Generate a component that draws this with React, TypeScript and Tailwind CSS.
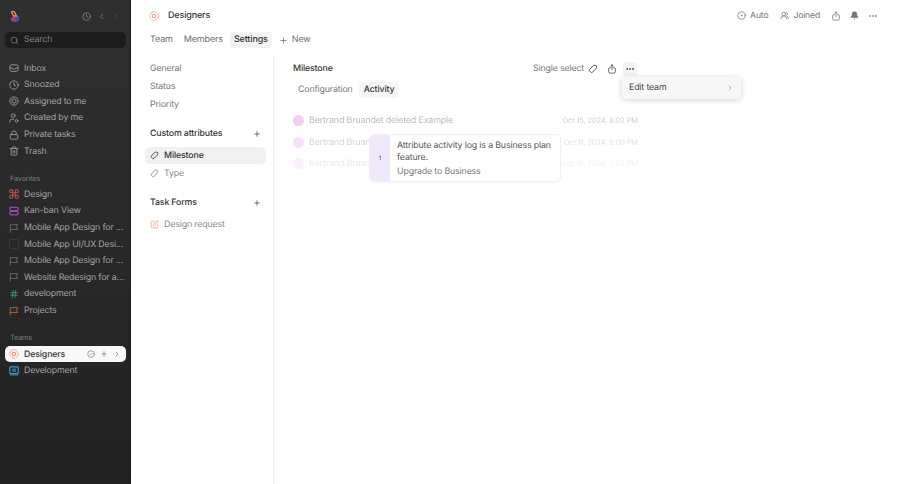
import {
  Bell,
  ChevronLeft,
  ChevronRight,
  CircleCheck,
  CircleDot,
  Clock,
  Ellipsis,
  Hash,
  Lock,
  Plus,
  Search,
  SquarePen,
  Trash2,
  UsersRound,
} from 'lucide-react'
import type { ReactNode } from 'react'

const font = { fontFamily: 'Inter, sans-serif' }

type IconProps = { className?: string }

function TeamIcon({ className = '' }: IconProps) {
  return (
    <svg viewBox="0 0 12 12" fill="none" stroke="currentColor" className={className}>
      <circle cx="6" cy="6" r="5" strokeWidth="1" strokeDasharray="2.2 0.6" />
      <circle cx="6" cy="6" r="2.2" strokeWidth="1.2" />
    </svg>
  )
}

function TagIcon({ className = '' }: IconProps) {
  return (
    <svg viewBox="0 0 12 12" fill="none" stroke="currentColor" strokeWidth="1.1" className={className}>
      <path d="M7.2 1.6h1.6a1.6 1.6 0 0 1 1.6 1.8l-.2 1a2 2 0 0 1-.6 1.1L5.4 9.9a1.5 1.5 0 0 1-2.1 0L2 8.6a1.5 1.5 0 0 1 0-2.1L6 2.1a1.6 1.6 0 0 1 1.2-.5z" />
    </svg>
  )
}

function ShareIcon({ className = '' }: IconProps) {
  return (
    <svg viewBox="0 0 12 12" fill="none" stroke="currentColor" strokeWidth="1" strokeLinecap="round" strokeLinejoin="round" className={className}>
      <path d="M6 7V1M4.4 2.5 6 1l1.6 1.5" />
      <path d="M4 4.4h-.5A1.5 1.5 0 0 0 2 5.9V9a2 2 0 0 0 2 2h4a2 2 0 0 0 2-2V5.9a1.5 1.5 0 0 0-1.5-1.5H8" />
    </svg>
  )
}

function FlagIcon({ className = '' }: IconProps) {
  return (
    <svg viewBox="0 0 12 12" fill="none" stroke="currentColor" strokeWidth="1" strokeLinejoin="round" strokeLinecap="round" className={className}>
      <path d="M1.5 11V2h9L8.8 4.7l1.7 3h-9" />
    </svg>
  )
}

function InboxIcon({ className = '' }: IconProps) {
  return (
    <svg viewBox="0 0 12 12" fill="none" stroke="currentColor" strokeWidth="1" strokeLinejoin="round" className={className}>
      <rect x="1" y="2.2" width="10" height="7.8" rx="2.2" />
      <path d="M1 6h2.8l.8 1.2h2.8L8.2 6H11" />
    </svg>
  )
}

function TargetIcon({ className = '' }: IconProps) {
  return (
    <svg viewBox="0 0 12 12" fill="none" stroke="currentColor" strokeWidth="1" className={className}>
      <circle cx="6" cy="6" r="5" />
      <circle cx="6" cy="6" r="2.6" />
    </svg>
  )
}

function CreatedIcon({ className = '' }: IconProps) {
  return (
    <svg viewBox="0 0 12 12" fill="none" stroke="currentColor" strokeWidth="1" strokeLinecap="round" className={className}>
      <circle cx="5" cy="3.2" r="2.2" />
      <path d="M1.2 11V9.5a2 2 0 0 1 2-2h2.3" />
      <circle cx="9" cy="9.3" r="1.6" />
    </svg>
  )
}

function DesignIcon({ className = '' }: IconProps) {
  return (
    <svg viewBox="0 0 12 12" fill="none" stroke="currentColor" strokeWidth="1.3" className={className}>
      <rect x="1" y="1" width="3.5" height="3.5" rx="1" />
      <rect x="7.5" y="1" width="3.5" height="3.5" rx="1" />
      <rect x="1" y="7.5" width="3.5" height="3.5" rx="1" />
      <rect x="7.5" y="7.5" width="3.5" height="3.5" rx="1" />
      <path d="M4.5 4.5h3v3h-3z" />
    </svg>
  )
}

function KanbanIcon({ className = '' }: IconProps) {
  return (
    <svg viewBox="0 0 12 12" fill="none" stroke="currentColor" strokeWidth="1.5" className={className}>
      <rect x="1" y="1.5" width="10" height="4" rx="1.5" />
      <rect x="1" y="6.5" width="10" height="4" rx="1.5" />
    </svg>
  )
}

function MonitorIcon({ className = '' }: IconProps) {
  return (
    <svg viewBox="0 0 12 12" className={className}>
      <rect x="1" y="1" width="10" height="8" rx="1" fill="none" stroke="currentColor" strokeWidth="1.4" />
      <rect x="3.5" y="3" width="5" height="4" fill="currentColor" opacity="0.6" />
      <path d="M1 10.7h10" stroke="currentColor" strokeWidth="1.2" />
    </svg>
  )
}

function Logo() {
  return (
    <svg viewBox="0 0 12 14" className="w-[11px] h-[13px]">
      <circle cx="7.6" cy="9.4" r="3.8" fill="#4f46a8" />
      <circle cx="4.5" cy="10.2" r="2.6" fill="#a83f72" />
      <path d="M2.8 2.2c1-1 2.7-1 3.3 0l2 4.3H5L2.8 2.2z" fill="none" stroke="#e0982f" strokeWidth="1.5" />
    </svg>
  )
}

function NavRow({ icon, label }: { icon: ReactNode; label: string }) {
  return (
    <div className="h-[16.6px] flex items-center pl-[9px] gap-[5px] text-[8.8px] text-[#a3a3a3] whitespace-nowrap">
      <span className="w-[10px] flex justify-center shrink-0">{icon}</span>
      <span>{label}</span>
    </div>
  )
}

const ic = 'w-[10px] h-[10px]'

function Sidebar() {
  return (
    <aside className="w-[131px] shrink-0 h-full bg-gradient-to-b from-[#2f2f2f] to-[#222222] border-r border-[#191919] flex flex-col">
      <div className="h-[32px] flex items-center pl-[9px] pr-[9px]">
        <Logo />
        <div className="ml-auto flex items-center gap-[6px]">
          <Clock className="w-[9px] h-[9px] text-[#8a8a8a]" />
          <ChevronLeft className="w-[9px] h-[9px] text-[#8a8a8a]" />
          <ChevronRight className="w-[9px] h-[9px] text-[#555555]" />
        </div>
      </div>
      <div className="ml-[5px] mr-[4px] h-[16px] rounded-[5px] bg-[#1d1d1d] flex items-center gap-[5px] pl-[5px] text-[8.8px] text-[#808080]">
        <Search className="w-[9px] h-[9px]" />
        Search
      </div>
      <div className="mt-[12px]">
        <NavRow icon={<InboxIcon className={ic} />} label="Inbox" />
        <NavRow icon={<Clock className={ic} />} label="Snoozed" />
        <NavRow icon={<TargetIcon className={ic} />} label="Assigned to me" />
        <NavRow icon={<CreatedIcon className={ic} />} label="Created by me" />
        <NavRow icon={<Lock className={ic} />} label="Private tasks" />
        <NavRow icon={<Trash2 className={ic} />} label="Trash" />
      </div>
      <div className="mt-[15px] mb-[2.5px] h-[9px] flex items-center pl-[10px] text-[7.3px] text-[#7c7c7c]">Favorites</div>
      <NavRow icon={<DesignIcon className={`${ic} text-[#b8514d]`} />} label="Design" />
      <NavRow icon={<KanbanIcon className={`${ic} text-[#9b45b5]`} />} label="Kan-ban View" />
      <NavRow icon={<FlagIcon className={`${ic} text-[#6f6f6f]`} />} label="Mobile App Design for ..." />
      <NavRow icon={<span className="block w-[10px] h-[10px] rounded-[2px] border border-[#3a3a3a]" />} label="Mobile App UI/UX Desi..." />
      <NavRow icon={<FlagIcon className={`${ic} text-[#6f6f6f]`} />} label="Mobile App Design for ..." />
      <NavRow icon={<FlagIcon className={`${ic} text-[#6f6f6f]`} />} label="Website Redesign for a..." />
      <NavRow icon={<Hash className={`${ic} text-[#3f9d78]`} />} label="development" />
      <NavRow icon={<FlagIcon className={`${ic} text-[#c0703f]`} />} label="Projects" />
      <div className="mt-[15px] mb-[2.5px] h-[10px] flex items-center pl-[10px] text-[7.3px] text-[#7c7c7c]">Teams</div>
      <div className="ml-[5px] mr-[4px] h-[16px] rounded-[5px] bg-[#f8f8f8] flex items-center pl-[4px] pr-[5px] text-[8.8px] font-medium text-[#333333]">
        <TeamIcon className="w-[10px] h-[10px] text-[#e58a63]" />
        <span className="ml-[5px]">Designers</span>
        <div className="ml-auto flex items-center gap-[5px] text-[#777777]">
          <CircleCheck className="w-[8px] h-[8px]" />
          <Plus className="w-[8px] h-[8px]" />
          <ChevronRight className="w-[8px] h-[8px]" />
        </div>
      </div>
      <NavRow icon={<MonitorIcon className={`${ic} text-[#3b9bd0]`} />} label="Development" />
    </aside>
  )
}

function Header() {
  return (
    <div className="h-[32px] flex items-center pl-[18px] pr-[22px]">
      <TeamIcon className="w-[10px] h-[10px] text-[#ea9a78]" />
      <span className="ml-[9px] text-[9px] font-medium text-[#333333]">Designers</span>
      <div className="ml-auto flex items-center text-[8.6px] text-[#777777]">
        <CircleDot className="w-[9px] h-[9px]" />
        <span className="ml-[4px]">Auto</span>
        <UsersRound className="w-[9px] h-[9px] ml-[12px]" />
        <span className="ml-[4px]">Joined</span>
        <ShareIcon className="w-[10px] h-[10px] ml-[11px]" />
        <Bell className="w-[9px] h-[9px] ml-[9px] fill-[#777777]" />
        <Ellipsis className="w-[10px] h-[10px] ml-[9px]" />
      </div>
    </div>
  )
}

function Tabs() {
  return (
    <div className="h-[16px] flex items-center pl-[19px] text-[9px] text-[#6e6e6e] whitespace-nowrap">
      <span>Team</span>
      <span className="ml-[11px]">Members</span>
      <span className="ml-[7px] px-[4px] h-[16px] flex items-center rounded-[4px] bg-[#f3f3f3] font-medium text-[#333333]">Settings</span>
      <Plus className="w-[9px] h-[9px] ml-[7px]" />
      <span className="ml-[4px]">New</span>
    </div>
  )
}

function AttrRow({ icon, label, active = false }: { icon: ReactNode; label: string; active?: boolean }) {
  return (
    <div className={`h-[17px] rounded-[5px] flex items-center pl-[5px] gap-[5px] text-[8.8px] ${active ? 'bg-[#f0f0f0] font-medium text-[#333333]' : 'text-[#8a8a8a]'}`}>
      {icon}
      {label}
    </div>
  )
}

function SettingsNav() {
  return (
    <div className="w-[143px] shrink-0 h-full border-r border-[#f0f0f0] pl-[14px] pr-[7px] pt-[5px]">
      {['General', 'Status', 'Priority'].map((label) => (
        <div key={label} className="h-[18px] pl-[5px] flex items-center text-[8.8px] text-[#777777]">{label}</div>
      ))}
      <div className="mt-[11px] h-[18px] pl-[5px] pr-[5px] flex items-center justify-between text-[8.8px] font-medium text-[#333333]">
        Custom attributes
        <Plus className="w-[8px] h-[8px]" />
      </div>
      <div className="mt-[4px]">
        <AttrRow active icon={<TagIcon className="w-[9px] h-[9px] text-[#333333]" />} label="Milestone" />
      </div>
      <div className="mt-[1px]">
        <AttrRow icon={<TagIcon className="w-[9px] h-[9px] text-[#888888]" />} label="Type" />
      </div>
      <div className="mt-[12px] h-[18px] pl-[5px] pr-[5px] flex items-center justify-between text-[8.8px] font-medium text-[#333333]">
        Task Forms
        <Plus className="w-[8px] h-[8px]" />
      </div>
      <div className="mt-[4px]">
        <AttrRow icon={<SquarePen className="w-[9px] h-[9px] text-[#e9a283]" />} label="Design request" />
      </div>
    </div>
  )
}

function ActivityRow({ tail, date, fade }: { tail: string; date: string; fade: string }) {
  return (
    <div className={`h-[21.5px] flex items-center text-[8.9px] blur-[0.6px] ${fade}`}>
      <span className="w-[11px] h-[11px] rounded-full bg-[#eec4f2]" />
      <span className="ml-[5px] text-[#a8a8a8]">{tail}</span>
      <span className="ml-auto text-[7.5px] text-[#c4c4c4]">{date}</span>
    </div>
  )
}

function Milestone() {
  return (
    <div className="relative w-[345px] ml-[19px] pt-[5px]">
      <div className="h-[18px] flex items-center text-[8.8px]">
        <span className="font-medium text-[#333333]">Milestone</span>
        <div className="ml-auto mr-[1px] flex items-center text-[#777777]">
          <span>Single select</span>
          <TagIcon className="w-[10px] h-[10px] ml-[4px] text-[#444444]" />
          <ShareIcon className="w-[10px] h-[10px] ml-[9px] text-[#444444]" />
          <span className="ml-[6px] w-[14px] h-[14px] rounded-[3px] bg-[#f3f3f3] flex items-center justify-center">
            <Ellipsis className="w-[10px] h-[10px] text-[#333333]" />
          </span>
        </div>
      </div>
      <div className="mt-[4px] ml-[5px] h-[16px] flex items-center text-[8.8px] text-[#777777]">
        Configuration
        <span className="ml-[6px] px-[5px] h-[16px] flex items-center rounded-[4px] bg-[#f6f6f6] font-medium text-[#333333]">Activity</span>
      </div>
      <div className="mt-[12px]">
        <ActivityRow tail="Bertrand Bruandet deleted Example" date="Oct 15, 2024, 8:02 PM" fade="opacity-80" />
        <ActivityRow tail="Bertrand Bruandet created Example" date="Oct 11, 2024, 8:00 PM" fade="opacity-50" />
        <ActivityRow tail="Bertrand Bruandet updated Example" date="Oct 10, 2024, 3:02 PM" fade="opacity-25" />
      </div>
      <div className="absolute left-[76px] top-[79px] w-[192px] h-[48px] rounded-[5px] bg-white border border-[#f1eef6] shadow-[0_1px_3px_rgba(0,0,0,0.03)] flex overflow-hidden">
        <div className="w-[20px] shrink-0 bg-[#efe8fb] flex items-center justify-center text-[6px] text-[#444444]">1</div>
        <div className="pl-[7px] pt-[5px] pr-[6px] text-[8.8px] leading-[12px] text-[#555555]">
          <div>Attribute activity log is a Business plan feature.</div>
          <div className="mt-[2px] text-[#777777]">Upgrade to Business</div>
        </div>
      </div>
      <div className="absolute left-[329px] top-[22px] w-[119px] h-[22px] rounded-[4px] bg-[#f7f7f7] shadow-[0_1px_6px_rgba(0,0,0,0.18)] flex items-center px-[7px] text-[8.8px] text-[#444444]">
        Edit team
        <ChevronRight className="w-[8px] h-[8px] ml-auto text-[#888888]" />
      </div>
    </div>
  )
}

export default function App() {
  return (
    <div className="w-[900px] h-[484px] flex bg-white overflow-hidden tracking-[-0.15px] [text-rendering:geometricPrecision]" style={font}>
      <Sidebar />
      <main className="flex-1 h-full flex flex-col">
        <Header />
        <Tabs />
        <div className="flex-1 flex mt-[7px]">
          <SettingsNav />
          <Milestone />
        </div>
      </main>
    </div>
  )
}
